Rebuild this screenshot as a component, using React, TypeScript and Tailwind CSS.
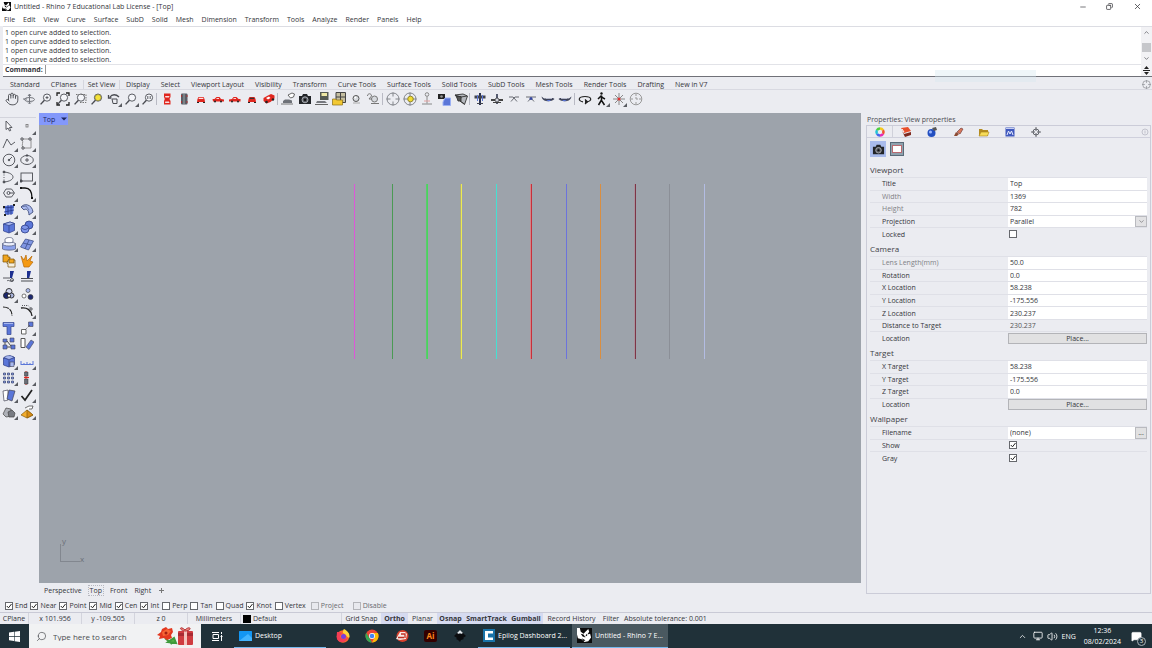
import React from "react";
import { ChevronDown, ChevronUp, Hand, Minus, Copy, X, Search, Monitor, Volume2, MessageSquareText } from "lucide-react";

type Icon = { name: string; art: React.ReactNode; more?: boolean };

const ink = "#4a4c52";
const blue = "#5b76d8";
const pale = "#a9b9f0";
const red = "#e0261f";

const Lens = ({ children }: { children?: React.ReactNode }) => (
  <g fill="none" stroke={ink} strokeWidth="0.9">
    <circle cx="8" cy="5.6" r="3.600" fill="#f4f5f9" />
    <path d="M5.400 8.200 1.600 12.400" strokeWidth="1.400" />
    {children}
  </g>
);

const Car = ({ dir }: { dir: number }) => (
  <g>
    <path d={dir > 0 ? "M1.500 7h2l2-2h3l1.500 2 3 .5V9.500h-11z" : "M12.500 7h-2l-2-2h-3L4 7l-3 .5v2h11.500z"} fill={red} />
    <path d="M6 6h2v1H5z" fill="#f8d5d5" />
    <circle cx="4" cy="9.600" r="1" fill="#222" />
    <circle cx="10" cy="9.600" r="1" fill="#222" />
  </g>
);

const CarFace = ({ rear }: { rear?: boolean }) => (
  <g>
    <path d="M4.500 5h5l1 2 .5 3h-8l.5-3z" fill={red} />
    <path d="M5 5.700h4L9.500 7h-5z" fill={rear ? "#333" : "#fbe3e3"} />
    <path d="M3 10h2v1H3zM9 10h2v1H9z" fill="#222" />
  </g>
);

const Target = ({ children }: { children?: React.ReactNode }) => (
  <g fill="none" stroke="#777a80" strokeWidth="0.9">
    <circle cx="7" cy="7" r="6" />
    <path d="M7 .5v4M7 9.500v4M.5 7h4M9.500 7h4" />
    {children}
  </g>
);

const Camera = () => (
  <g>
    <path d="M1 4h3l1-2h4l1 2h3v8H1z" fill="#222428" />
    <circle cx="7" cy="7.800" r="3" fill="#55585f" stroke="#bfc2c8" strokeWidth="0.8" />
    <circle cx="7" cy="7.800" r="1.200" fill="#111" />
  </g>
);

const Plane = ({ flip }: { flip?: boolean }) => (
  <g transform={flip ? "translate(14 0) scale(-1 1)" : undefined}>
    <path d="M.5 4.500c1 .5 2 2 3 2l8.500-.5 1.500 1c-2 2-5.500 2.500-8.500 2C2.500 8.600 1 7 .5 4.500z" fill="#3f4458" />
    <path d="M5 8h5L8 9.500z" fill={blue} />
    <path d="M5 6.500h6" stroke="#c9cde0" strokeWidth="0.8" />
  </g>
);

const topGroups: { wide?: boolean; items: Icon[] }[] = [
  {
    items: [
      { name: "Pan", art: <Hand width={14} height={14} strokeWidth={1.6} color={ink} /> },
      { name: "Rotate view", art: <g fill="none" stroke="#74777e"><ellipse cx="7.500" cy="7.500" rx="5" ry="2" /><path d="M7.500 2.500v9M6 4l1.500-2L9 4M6 10.500l1.500 1.500L9 10.500M1 7h4" /></g> },
      { name: "Zoom dynamic", art: <Lens><path d="M6.500 5.600h3M8 4.100v3" /></Lens> },
      { name: "Zoom extents", art: <g><Lens /><path d="M1 4V1h3M10 1h3v3M13 10v3h-3M4 13H1v-3" fill="none" stroke="#222" strokeWidth="1.300" /></g> },
      { name: "Zoom window", art: <g><Lens /><path d="M3 2.500h10v8H6" fill="none" stroke="#777" strokeDasharray="1.500 1" /></g> },
      { name: "Zoom selected", art: <g><Lens /><circle cx="8" cy="5.600" r="3.100" fill="#f4e23a" stroke="#77702a" strokeWidth=".6" /></g> },
      { name: "Undo view change", more: true, art: <g fill="none" stroke={ink}><path d="M3 5c2-3 6-3 9 0M1.500 3v3h3" strokeWidth="1.300" /><path d="M5 7h5v4.500H6z" /></g> },
      { name: "Zoom target", more: true, art: <Lens /> },
      { name: "Zoom 1:1", art: <Lens><path d="M6.800 4v3M9.200 4v3" /></Lens> },
    ],
  },
  {
    items: [
      { name: "Top view", art: <g><path d="M4 1.500h6.500V5l-1 2 1 2v3.500H4V9l.8-2L4 5z" fill={red} /><path d="M5 4h4.500L9 5.500H5.500zM5.300 9.500h3.600L9.500 11H5z" fill="#f9dede" /></g> },
      { name: "Bottom view", art: <g><rect x="4" y="1.500" width="6.500" height="11" rx="1" fill="#5a5d66" /><path d="M4 3h1v2H4zM9.500 3h1v2h-1zM4 9h1v2H4zM9.500 9h1v2h-1z" fill="#a33" /><path d="M7 2v10" stroke="#9aa" /></g> },
      { name: "Front view", art: <CarFace /> },
      { name: "Right view", art: <Car dir={1} /> },
      { name: "Left view", art: <Car dir={-1} /> },
      { name: "Back view", art: <CarFace rear /> },
      { name: "Perspective view", art: <g><path d="M1.500 6 5 4l4-2 3.500 1.500v3L8.500 10l-4 1.500L1.500 9z" fill={red} /><path d="m4 6 3-1.500L8.500 6 6 7.500z" fill="#fff" /><circle cx="4.500" cy="10" r="1.300" fill="#222" /><circle cx="11" cy="7.500" r="1.200" fill="#222" /></g> },
    ],
  },
  {
    items: [
      { name: "Named views", art: <g><path d="M2 9l2-1.500h4l3 1V11H2z" fill="#6e7178" /><path d="M0 12h12" stroke="#777" /><path d="m7 3 4-2 2.500 1-1 3-3 1z" fill="#fff" stroke="#444" strokeWidth=".8" /></g> },
      { name: "Camera", art: <Camera /> },
      { name: "Save view", art: <g><path d="M5 0h8.500v8H5z" fill="#555a54" /><path d="M6.500 1h5.500v3H6.500z" fill="#eee8a5" /><path d="M2 9h8l2 2H1z" fill="#77797f" /><path d="M0 12.500h13" stroke="#666" /></g> },
      { name: "Open view", art: <g><path d="M4 .5h9.500v10H4z" fill="#c4bea0" stroke="#444" /><path d="M8.500 1v9M4 5h9" stroke="#444" /><path d="M.5 7h3l1 1h6v5H.5z" fill="#f2c833" stroke="#8b6e12" strokeWidth=".7" /></g> },
      { name: "Camera position", art: <g><circle cx="7" cy="6.500" r="3" fill="#d7dade" stroke="#555" /><path d="M4 11h7" stroke="#aaa" /><circle cx="6.300" cy="5.500" r="1" fill="#fff" /></g> },
      { name: "Match view", art: <g fill="none" stroke="#777"><circle cx="8.500" cy="7" r="3" fill="#d7dade" /><path d="M1.500 4c0-3 4-3 4 0L3 7h3M5 11.500h8" /></g> },
    ],
  },
  {
    wide: true,
    items: [
      { name: "Place target", art: <Target /> },
      { name: "Place camera", art: <Target><circle cx="7.500" cy="7" r="2.800" fill="#f1dc32" stroke="#8a7d20" /></Target> },
      { name: "Align to point", art: <g fill="none" stroke="#888"><circle cx="7" cy="2.500" r="1.800" /><path d="M7 4.500v7M2 12h10" /><path d="M4 9h6" stroke="#e3a2a2" /></g> },
      { name: "Camera to object", art: <g><path d="M1 2h7v5H1z" fill="#222" /><circle cx="4.500" cy="4.500" r="1.300" fill="#999" /><path d="M8 6h5.500v7.500H6V10z" fill={blue} stroke="#9bb0f5" /></g> },
      { name: "Show camera", art: <g stroke="#333" strokeWidth=".9"><path d="m1 3 8-1 4.500 2-3 8.500-5-4z" fill="#b5b8be" /><path d="m1 3 6 2 6-1M7 5l-1 4 4.500 3" fill="none" /><path d="M2.500 4.500h4.500v4.500h-3z" fill="#555" /></g> },
    ],
  },
  {
    items: [
      { name: "Plane top", art: <g><path d="M6 1h2v12H6z" fill="#2b3152" /><path d="M1.500 3.500h11v3h-11zM4 11h6v1H4z" fill="#42454e" /><path d="M4 3h1v6H4zM9 3h1v6H9z" fill={blue} /></g> },
      { name: "Plane bottom", art: <g><path d="M6 2h2v10H6z" fill="#555b70" /><path d="M1 7h12v2H1zM3 10h8v1H3z" fill="#444" /><circle cx="7" cy="8" r="2" fill="#d2d5df" stroke="#333" strokeWidth=".7" /></g> },
      { name: "Plane front", art: <path d="M2 5h4l1 1 1-1h4M4 9.500 7 6l3 3.500" stroke="#6a6d75" fill="none" /> },
      { name: "Plane back", art: <g><path d="M2 5h10M4 9.500 7 6l3 3.500" stroke="#6a6d75" fill="none" /><circle cx="7" cy="6.500" r="1.500" fill="#3848a0" /></g> },
      { name: "Plane right", art: <Plane /> },
      { name: "Plane left", art: <Plane flip /> },
    ],
  },
  {
    wide: true,
    items: [
      { name: "Turntable", art: <g fill="none" stroke="#222" strokeWidth="1.200"><path d="M5 9.800C-.5 9 0 4.500 7 4.500s7.500 4.500 2 5.300" /><path d="m7 7.500 2.500 2.300L7 12" fill="#222" /></g> },
      { name: "Walkabout", more: true, art: <g fill="none" stroke="#111" strokeWidth="1.500"><circle cx="6.500" cy="1.500" r="1.200" fill="#111" stroke="none" /><path d="M6.500 3.500v5l3 4.500M6.500 8l-3 5M3 7l3-3 2 2 2 1" /></g> },
      { name: "Spin view", more: true, art: <g fill="none" stroke="#888" strokeWidth="1"><path d="M1 7h12M7 1v12M3 3l8 8M11 3l-8 8" /><circle cx="7" cy="7" r="1.500" fill="#d33" stroke="none" /></g> },
      { name: "Clock", art: <g fill="none" stroke="#999"><circle cx="7" cy="7" r="5.800" /><path d="M7 2v2M7 10v2M2 7h2M10 7h2M7 5v2h2" /></g> },
    ],
  },
];

const Cube = () => (
  <g stroke="#2c3c86" strokeWidth=".7">
    <path d="M1.500 4 8 2l4.500 1.500v7L7 13l-5.500-2z" fill={blue} />
    <path d="M1.500 4 8 2l4.500 1.500L7 5.500z" fill={pale} />
    <path d="M7 5.500V13" />
  </g>
);

const line = { fill: "none", stroke: ink, strokeWidth: 0.9 };

const sideIcons: Icon[] = [
  { name: "Select", art: <path d="m4 2 6 6.500H7.500l1.200 3-1.200.5-1.500-3L4 10.500z" fill="#f8f8fb" stroke={ink} strokeWidth=".9" /> },
  { name: "Point", more: true, art: <rect x="6" y="5.500" width="2" height="2.500" fill="none" stroke="#777" strokeWidth=".8" /> },
  { name: "Polyline", more: true, art: <path d="m1 12 4-9 4 6 4-3" {...line} /> },
  { name: "Control point curve", more: true, art: <g {...line}><path d="M2 3h8M2 3c2 4-1 5 1 9h8V3" stroke="#888" /><path d="M1 2h2v2H1zM9 2h2v2H9zM2 11h2v2H2z" fill="#fff" /></g> },
  { name: "Circle", more: true, art: <g {...line}><circle cx="7" cy="7" r="5.800" /><path d="m7 7 3-3" /><circle cx="7" cy="7" r=".8" fill={ink} /></g> },
  { name: "Ellipse", more: true, art: <g {...line}><ellipse cx="7" cy="7" rx="6.300" ry="4.500" /><path d="M7 5v4M5 7h4" /><circle cx="7" cy="2.500" r=".8" fill={ink} /></g> },
  { name: "Arc", more: true, art: <g {...line}><path d="M2 2c12 1 12 9 0 10" /><path d="M2 2v10" strokeDasharray="1 1.500" /><circle cx="2" cy="2" r="1" fill={ink} /><circle cx="2" cy="12" r="1" fill={ink} /></g> },
  { name: "Rectangle", more: true, art: <g {...line}><rect x="1" y="3" width="11.500" height="8" /><path d="M0 10h2v2H0z" fill={ink} /></g> },
  { name: "Polygon", more: true, art: <g {...line}><path d="M4 3h5.500l3 4-3 4H4L1.500 7z" /><circle cx="6.500" cy="7" r="1.500" /><path d="M7 7h5" /></g> },
  { name: "Fillet curves", more: true, art: <g fill="none" stroke="#111" strokeWidth="1.300"><path d="M1 2h4c5 0 7 4 7 10" /><path d="M1 3v-2M11 12h2" strokeWidth="2" /></g> },
  { name: "Surface from points", more: true, art: <g><path d="m3 3 9-1-1 9-8 1z" fill={blue} /><path d="m1 5 11-1M2 9l10-2M6 2v10M9 2v10" stroke="#26388b" strokeWidth=".8" /><path d="M1 3h2v2H1zM2 11h2v2H2zM11 1h2v2h-2z" fill="#222" /></g> },
  { name: "Surface tools", more: true, art: <g><path d="M1 4c3-4 11-3 12 5l-4 3C9 7 6 5 4 7z" fill={pale} stroke="#4d5a86" /><path d="m1 4 5-1 3 4" fill="none" stroke="#4d5a86" strokeWidth=".7" /></g> },
  { name: "Box", more: true, art: <Cube /> },
  { name: "Boolean", more: true, art: <g stroke="#2c3c86" strokeWidth=".8"><circle cx="9" cy="5" r="4" fill={blue} /><circle cx="5" cy="9" r="4" fill="#7d94e8" /><path d="M2 8c2 2 4 2 6 0" fill="none" /></g> },
  { name: "Solid tools", more: true, art: <g stroke="#4c5576" strokeWidth=".7"><path d="M.5 6.500v5.500c2 1.500 11 1.500 13 0V6.500z" fill="#8da2eb" /><ellipse cx="7" cy="7" rx="6.500" ry="2" fill="#e9edfb" /><path d="M3 2c2-2 7-2 8 0v3c-2 1-6 1-8 0z" fill="#fff" /></g> },
  { name: "SubD", more: true, art: <g stroke="#33457f" strokeWidth=".7"><path d="m.5 10 5-8 8 2-5 9z" fill="#7f95e2" /><path d="m3 6 8 2M5 12l4-9" fill="none" /></g> },
  { name: "Plugins", art: <g fill="#f0a51f" stroke="#7a5207" strokeWidth=".7"><path d="M1 1h5v2h2v5H1z" /><path d="M6 6h7v7H6V9.500H5V8h1z" fill="#f6f0e0" /><path d="M7 5h5v4H7z" /></g> },
  { name: "Explode", art: <path d="m1 2 3 4 2-5 1 6 5-5-2 5 3 1-4 5H4z" fill="#f59a13" stroke="#b86806" strokeWidth=".7" /> },
  { name: "Trim", art: <g><path d="M8 1h4l-2 7H8z" fill="#1d2f8f" /><path d="M1 8h7M5 11c2-2 3 2 6-1" {...line} /><circle cx="10" cy="10" r="1.500" {...line} /></g> },
  { name: "Split", art: <g><path d="M7 1h4l-2 8H7z" fill="#1d2f8f" /><path d="M1 8.500h12M1 11h12" stroke={ink} strokeWidth="1.200" /></g> },
  { name: "Group", more: true, art: <g stroke="#222" strokeWidth=".9"><circle cx="7" cy="4.500" r="3" fill="#d4d9ef" /><circle cx="4.500" cy="8.500" r="3" fill="#1c276f" /><circle cx="9.500" cy="8.500" r="2.500" fill="#a9b3dc" /><path d="M7 6.500 9 9l-2 1.500L5 9z" fill="#fff" /></g> },
  { name: "Ungroup", art: <g stroke="#444" strokeWidth=".7"><circle cx="8" cy="3.500" r="2" fill={pale} /><circle cx="4" cy="9" r="2" fill="#fff" /><circle cx="10.500" cy="10" r="2.500" fill="#1c276f" /></g> },
  { name: "Edit points", art: <path d="M1 3c6 0 9 3 9 9" fill="none" stroke="#222" strokeWidth="1.200" strokeDasharray="6 1" /> },
  { name: "Control points on", more: true, art: <g {...line}><path d="M1 4c6-1 10 2 11 8" stroke="#222" strokeWidth="1.300" /><path d="M2 1.500h6l3 3" strokeDasharray="1 1" /><path d="M10 4h2v2h-2z" fill="#fff" /></g> },
  { name: "Text", art: <g><path d="M1 1.500h11v4h-3v8H5v-8H1z" fill={blue} stroke="#33458d" strokeWidth=".7" /><path d="M2 2h9v1H2z" fill={pale} /></g> },
  { name: "Move", more: true, art: <g><path d="M1.500 8.500h4.500v4.500H1.500z" fill="#fff" stroke="#666" /><path d="M8.500 1H13v4.500H8.500z" fill={blue} stroke="#445" strokeWidth=".6" /><path d="m5 9 5-5" stroke={ink} strokeDasharray="1 1" /></g> },
  { name: "Array", art: <g><path d="M1 2h4v3H1zM1 8h4v4H1zM8 1h4v4H8zM9 8h4v4H9z" fill={blue} stroke="#445" strokeWidth=".6" /><path d="M3 5v3M5 4l4 5M5 10h4" stroke={ink} /></g> },
  { name: "Orient", art: <g><path d="M1 1.500h4v9H1z" fill="#fff" stroke="#555" /><path d="m6 10 5-7 3 2-5 7.500z" fill={blue} stroke="#445" strokeWidth=".6" /></g> },
  { name: "Solid edit", more: true, art: <g><Cube /><path d="M2 3.500C4 1 10 1 12 3.500L7 5.500z" fill={pale} stroke="#2c3c86" strokeWidth=".6" /><path d="M8 8h4v4.500H8z" fill={pale} stroke="#445" strokeWidth=".6" /></g> },
  { name: "Dimension", more: true, art: <path d="M1 10.500h12M1 7v4M4 9v2M7 8v3M10 9v2M13 7v4" stroke={blue} fill="none" /> },
  { name: "Grid array", more: true, art: <path d="M1.500 2h2v2h-2zM5.500 2h2v2h-2zM9.500 2h2v2h-2zM1.500 6h2v2h-2zM5.500 6h2v2h-2zM9.500 6h2v2h-2zM1.500 10h2v2h-2zM5.500 10h2v2h-2zM9.500 10h2v2h-2z" fill="#8fa2e8" stroke="#34406e" strokeWidth=".7" /> },
  { name: "Align", more: true, art: <g><path d="M6 0v14" stroke={red} /><path d="M4.500 1h3.500v4H4.500zM4.500 8h3.500v5H4.500z" fill="#6b6f78" stroke="#333" strokeWidth=".5" /><path d="M4 6.500h5" stroke={red} strokeWidth="1.200" /></g> },
  { name: "Layout", more: true, art: <g stroke="#445" strokeWidth=".7"><path d="m1 3 5-1v10l-4 1z" fill="#fff" /><path d="m7 2 6 1-3 10-5-2z" fill={blue} /></g> },
  { name: "Check", more: true, art: <path d="m1.500 8 3.500 4L12 2" fill="none" stroke="#222" strokeWidth="1.700" /> },
  { name: "Render", more: true, art: <g stroke="#444" strokeWidth=".7"><path d="m1 9 3-6 5 1 1 7-6 1z" fill="#aeb1b8" /><path d="m6 7 4-2 3 3-1 4H7z" fill="#787b82" /></g> },
  { name: "Pyramid", more: true, art: <g strokeWidth=".7"><path d="m1 10 6-5 6 5-6 3z" fill="#f3ac2c" stroke="#855b0f" /><path d="M7 5v8l6-3z" fill="#d98d16" stroke="#855b0f" /><path d="m5 3 4-2h4l-1 3H9" fill="#fff" stroke="#333" /></g> },
];

function ToolButton({ icon, className }: { icon: Icon; className: string }) {
  return (
    <button aria-label={icon.name} className={`relative flex items-center justify-center ${className}`}>
      <svg width="14" height="14" viewBox="0 0 14 14" aria-hidden="true" className="shrink-0">{icon.art}</svg>
      {icon.more && (
        <svg className="absolute right-0 bottom-0" width="4" height="4" viewBox="0 0 4 4" aria-hidden="true">
          <path d="M4 0v4H0z" fill="#5a5c62" />
        </svg>
      )}
    </button>
  );
}

function RhinoLogo({ className }: { className: string }) {
  return (
    <svg viewBox="0 0 16 16" className={`shrink-0 ${className}`} aria-hidden="true">
      <rect width="16" height="16" fill="#0b0b0b" />
      <path d="M0 0h3l1 4 3 2 2-2 3-3 1 3-2 3 3-1 1 4-3 4-4 1-3-3-4-1-1-4z" fill="#fff" />
      <path d="m4 6 3 1 2 3-3-1zM10 6l1 2-2 1zM5 11l4 2-2 1z" fill="#0b0b0b" />
    </svg>
  );
}

const menus = ["File", "Edit", "View", "Curve", "Surface", "SubD", "Solid", "Mesh", "Dimension", "Transform", "Tools", "Analyze", "Render", "Panels", "Help"];
const tabs = ["Standard", "CPlanes", "Set View", "Display", "Select", "Viewport Layout", "Visibility", "Transform", "Curve Tools", "Surface Tools", "Solid Tools", "SubD Tools", "Mesh Tools", "Render Tools", "Drafting", "New in V7"];

// Each curve is one pixel wide; "edge" is the anti-aliased pixel to its left.
const curves: { x: number; color: string; edge?: string }[] = [
  { x: 315, color: "#dd56d8" },
  { x: 353, color: "#4b9a54" },
  { x: 388, color: "#46d75c", edge: "#5cc96c" },
  { x: 422, color: "#eceb50", edge: "#b0ae7e" },
  { x: 457, color: "#45e0d2" },
  { x: 492, color: "#c8303b", edge: "#d08488" },
  { x: 527, color: "#6c73dc" },
  { x: 561, color: "#d98e41" },
  { x: 596, color: "#7d3547", edge: "#a8929c" },
  { x: 630, color: "#8b8f97" },
  { x: 665, color: "#b3bce2" },
];

type Row = { label: string; value?: string; kind?: "select" | "check" | "button" | "file" | "static"; checked?: boolean; dim?: boolean };
const sections: { title: string; size: string; rows: Row[] }[] = [
  {
    title: "Viewport",
    size: "h-[63px]",
    rows: [
      { label: "Title", value: "Top" },
      { label: "Width", value: "1369", dim: true },
      { label: "Height", value: "782", dim: true },
      { label: "Projection", value: "Parallel", kind: "select" },
      { label: "Locked", kind: "check" },
    ],
  },
  {
    title: "Camera",
    size: "h-[88px]",
    rows: [
      { label: "Lens Length(mm)", value: "50.0", dim: true },
      { label: "Rotation", value: "0.0" },
      { label: "X Location", value: "58.238" },
      { label: "Y Location", value: "-175.556" },
      { label: "Z Location", value: "230.237" },
      { label: "Distance to Target", value: "230.237", kind: "static" },
      { label: "Location", value: "Place...", kind: "button" },
    ],
  },
  {
    title: "Target",
    size: "h-[50px]",
    rows: [
      { label: "X Target", value: "58.238" },
      { label: "Y Target", value: "-175.556" },
      { label: "Z Target", value: "0.0" },
      { label: "Location", value: "Place...", kind: "button" },
    ],
  },
  {
    title: "Wallpaper",
    size: "h-[38px]",
    rows: [
      { label: "Filename", value: "(none)", kind: "file" },
      { label: "Show", kind: "check", checked: true },
      { label: "Gray", kind: "check", checked: true },
    ],
  },
];

function Check({ id, checked, disabled }: { id: string; checked?: boolean; disabled?: boolean }) {
  return (
    <span className="relative inline-flex size-2 shrink-0">
      <input
        id={id}
        type="checkbox"
        defaultChecked={checked}
        disabled={disabled}
        className="peer size-2 appearance-none border border-[#66686d] bg-white disabled:border-[#b4b5ba] disabled:bg-[#e8e9ee]"
      />
      <svg viewBox="0 0 8 8" className="pointer-events-none absolute inset-0 hidden size-2 peer-checked:block" aria-hidden="true">
        <path d="M1.800 4 3.500 5.800 6.500 2" fill="none" stroke="#222" strokeWidth="1" />
      </svg>
    </span>
  );
}

function PropertyValue({ row, id }: { row: Row; id: string }) {
  const field = "min-w-0 flex-1 self-stretch bg-white px-0.5 outline-none";
  if (row.kind === "check") return <span className="flex pl-px"><Check id={id} checked={row.checked} /></span>;
  if (row.kind === "static") return <output id={id} className="px-0.5 text-[#555]">{row.value}</output>;
  if (row.kind === "button")
    return <button id={id} className="h-[11px] flex-1 border border-[#b3b4b8] bg-[#e1e1e2] leading-[9px]">{row.value}</button>;
  if (row.kind === "select")
    return (
      <span className="relative flex flex-1 self-stretch">
        <select id={id} defaultValue={row.value} className={`${field} appearance-none`}>
          <option>Parallel</option>
          <option>Perspective</option>
        </select>
        <span className="pointer-events-none absolute inset-y-0 right-0 flex w-3 items-center justify-center border border-[#b9babf] bg-[#e2e2e4]">
          <ChevronDown size={7} strokeWidth={1.500} />
        </span>
      </span>
    );
  return (
    <>
      <input id={id} defaultValue={row.value} className={field} />
      {row.kind === "file" && <button aria-label="Browse" className="h-3 w-3 border border-[#b9babf] bg-[#e1e1e2] leading-[6px]">...</button>}
    </>
  );
}

const panelTabs: { name: string; art: React.ReactNode }[] = [
  {
    name: "Properties",
    art: (
      <g fill="none" strokeWidth="2.500">
        <path d="M6 2.500a3.500 3.500 0 0 1 3 1.700" stroke="#f4c91d" />
        <path d="M9 4.200a3.500 3.500 0 0 1 0 3.600" stroke="#f0542c" />
        <path d="M9 7.800a3.500 3.500 0 0 1-3 1.700" stroke="#e52ab4" />
        <path d="M6 9.500a3.500 3.500 0 0 1-3-1.700" stroke="#4763ed" />
        <path d="M3 7.800a3.500 3.500 0 0 1 0-3.600" stroke="#25c1d8" />
        <path d="M3 4.200a3.500 3.500 0 0 1 3-1.700" stroke="#4fcf3c" />
      </g>
    ),
  },
  { name: "Layers", art: <g><path d="m1 2 7-1 3 4-7 2z" fill="#e8502c" /><path d="m2 5 2 3 7-2v3L5 11z" fill="#7e2a20" /><path d="m2 3 2 3" stroke="#fff" /></g> },
  { name: "Display", art: <g><circle cx="5.500" cy="7" r="4" fill="#234fc0" /><circle cx="4.500" cy="6" r="1.500" fill="#9bb8ff" /><path d="m6 2 4-1 1 3-3 1z" fill="#555" /></g> },
  { name: "Materials", art: <g><path d="m2 10 2-4 3 2-2 2z" fill="#8d4a32" /><path d="m5 6 4-4 2 1-3 5z" fill="#d9785b" stroke="#633" strokeWidth=".6" /></g> },
  { name: "Libraries", art: <g><path d="M1 3h3l1 1h5v6H1z" fill="#b48b1f" /><path d="m3 6h8l-1.500 4H1z" fill="#f7dc58" stroke="#a6821c" strokeWidth=".6" /></g> },
  { name: "Notes", art: <g><rect x="1.500" y="1.500" width="9" height="9" fill="#4059bd" /><path d="M2 2.500h8" stroke="#c7cff2" /><path d="m3 9 1.500-4L6 8l1.500-3L9 9" fill="none" stroke="#e9edff" /></g> },
  { name: "Named positions", art: <g fill="none" stroke="#55585e" strokeWidth=".9"><circle cx="6" cy="6" r="3" /><path d="M6 1v4M6 7v4M1 6h4M7 6h4" /></g> },
];

function PropertiesPanel() {
  return (
    <aside className="ml-[5px] flex w-[286px] shrink-0 flex-col pt-0.5 pb-1.5">
      <h2 className="h-[10px] px-px leading-[9px] text-[#4a4b50]">Properties: View properties</h2>
      <div className="mr-px flex flex-1 flex-col border border-[#cbccd8]">
        <div className="flex h-3 items-center border-b border-[#cfd0dc] pr-px">
          {panelTabs.map((t, i) => (
            <button key={t.name} aria-label={t.name} className={i === 0 ? "flex h-3 w-[26px] items-center justify-center border-r border-[#d0d1da]" : "flex w-[26px] items-center justify-center"}>
              <svg width="12" height="12" viewBox="0 0 12 12" aria-hidden="true">{t.art}</svg>
            </button>
          ))}
          <button aria-label="Panel options" className="ml-auto">
            <svg width="8" height="8" viewBox="0 0 8 8" fill="none" stroke="#c2c3cd" aria-hidden="true"><circle cx="4" cy="4" r="3" /><path d="M4 2.500v3" /></svg>
          </button>
        </div>
        <div className="flex gap-1 px-[3px] pt-[3px]">
          <button aria-label="View properties" className="flex size-4 items-center justify-center bg-[#a9bbec]">
            <svg width="13" height="13" viewBox="0 0 14 14" aria-hidden="true"><Camera /></svg>
          </button>
          <button aria-label="Viewport frame" className="flex size-[14px] items-center justify-center self-center border border-[#596a78] bg-[#8fa2ae]">
            <span className="h-2 w-2.5 border border-[#b96a70] bg-white" />
          </button>
        </div>
        <div className="mt-1 pr-[3px] pl-[3px]">
          {sections.map((s) => (
            <section key={s.title}>
              <h3 className="h-4 text-[8px] leading-[17px] text-[#404146]">{s.title}</h3>
              <div className={`grid auto-rows-fr ${s.size}`}>
                {s.rows.map((r) => {
                  const id = `${s.title}-${r.label}`.replace(/\W+/g, "-");
                  return (
                    <div key={r.label} className="flex min-h-0 items-center border-t border-[#dfe0e7]">
                      <label htmlFor={id} className={r.dim ? "w-[138px] shrink-0 pl-3 text-[#808186]" : "w-[138px] shrink-0 pl-3"}>{r.label}</label>
                      <div className="flex min-w-0 flex-1 items-center self-stretch">
                        <PropertyValue row={r} id={id} />
                      </div>
                    </div>
                  );
                })}
              </div>
            </section>
          ))}
        </div>
      </div>
    </aside>
  );
}

const snaps: { label: string; on?: boolean; off?: boolean }[] = [
  { label: "End", on: true }, { label: "Near", on: true }, { label: "Point", on: true }, { label: "Mid", on: true },
  { label: "Cen", on: true }, { label: "Int", on: true }, { label: "Perp" }, { label: "Tan" }, { label: "Quad" },
  { label: "Knot", on: true }, { label: "Vertex" }, { label: "Project", off: true }, { label: "Disable", off: true },
];

const toggles: { label: string; on?: boolean; width: string }[] = [
  { label: "Grid Snap", width: "w-[39px]" },
  { label: "Ortho", on: true, width: "w-[27px]" },
  { label: "Planar", width: "w-[29px]" },
  { label: "Osnap", on: true, width: "w-[27px]" },
  { label: "SmartTrack", on: true, width: "w-[45px]" },
  { label: "Gumball", on: true, width: "w-[34px]" },
  { label: "Record History", width: "w-[57px]" },
  { label: "Filter", width: "w-[22px]" },
];

function Taskbar() {
  return (
    <footer className="flex h-6 shrink-0 items-stretch bg-[#203139] text-white">
      <button aria-label="Start" className="flex w-[29px] items-center justify-center">
        <svg width="11" height="11" viewBox="0 0 11 11" fill="#fff" aria-hidden="true"><path d="M0 1.500 5 .8V5H0zM5.600.7 11 0v5H5.600zM0 5.700h5v4.200L0 9.200zM5.600 5.700H11V11l-5.400-.8z" /></svg>
      </button>
      <div className="flex w-[172px] items-center bg-[#f1f2f3] text-[#4b4d50]">
        <Search size={11} strokeWidth={1.500} className="ml-[7px] -scale-x-100" />
        <input aria-label="Search" placeholder="Type here to search" className="ml-1.5 min-w-0 flex-1 bg-transparent text-[8px] outline-none placeholder:text-[#4b4d50]" />
        <svg width="38" height="20" viewBox="0 0 38 20" aria-hidden="true" className="mr-1.5">
          <path d="m8 12 7 6M11 16l6-4 2 5z" stroke="#3e9a3c" strokeWidth="2" fill="#57b347" />
          <path d="m5 3 4-2 2 2 4-1 1 4-2 3 1 3-5 2-3-2-5 1 1-3-3-1 4-3z" fill="#e3371f" />
          <path d="m5 6 5-3 4 2-3 4-5 1z" fill="#f76635" />
          <circle cx="9" cy="7" r="1.500" fill="#a41d12" />
          <rect x="21" y="5" width="15" height="14" rx="1" fill="#cf3c40" />
          <path d="M21 7h15v3H21z" fill="#a92b33" />
          <path d="M27 5h3v14h-3z" fill="#f4c4bd" />
          <path d="M28 5c-7-1-5-6 0-1 5-5 8 0 1 1z" fill="#ef8a80" stroke="#b02f35" />
        </svg>
      </div>
      <button aria-label="Task view" className="flex w-[33px] items-center justify-center">
        <svg width="11" height="11" viewBox="0 0 11 11" fill="none" stroke="#fff" aria-hidden="true"><path d="M0 1.500h7M0 9.500h7M1 3.500h5.500v4H1zM9.500 1v2M9.500 4v6M8.500 5.500h2" /></svg>
      </button>
      <button className="flex w-[92px] items-center gap-[3px] border-b border-[#76b9ed] pl-[5px] text-left">
        <svg width="13" height="10" viewBox="0 0 13 10" aria-hidden="true"><rect width="13" height="10" rx=".5" fill="#1396f3" /><path d="M0 10 9 3l4 4v3z" fill="#42b4ff" /></svg>
        Desktop
      </button>
      <nav aria-label="Pinned apps" className="ml-[2px] flex">
        <button aria-label="Firefox" className="flex w-[29px] items-center justify-center">
          <svg width="14" height="14" viewBox="0 0 14 14" aria-hidden="true"><circle cx="7" cy="7.500" r="6.200" fill="#ff6a2b" /><path d="M8 0c4 2 6 5 5.500 8.500C11 9 10 5 7 4c0-2 0-3 1-4z" fill="#ffd43b" /><path d="M1 3c2 0 4 0 5 1L4 7c0 4 6 4 8 1-1 7-12 7-11.300-1z" fill="#f63d55" /><circle cx="7.500" cy="7.500" r="2.500" fill="#7a3ee0" /></svg>
        </button>
        <button aria-label="Chrome" className="flex w-[30px] items-center justify-center">
          <svg width="14" height="14" viewBox="0 0 14 14" aria-hidden="true"><circle cx="7" cy="7" r="6.500" fill="#e94335" /><path d="M1.300 3.800 7 13.500A6.500 6.500 0 0 1 1.300 3.800z" fill="#34a853" /><path d="M7 4h5.800A6.500 6.500 0 0 1 7 13.500L9.600 8.500z" fill="#fbbc05" /><circle cx="7" cy="7" r="3" fill="#fff" /><circle cx="7" cy="7" r="2.300" fill="#4285f4" /></svg>
        </button>
        <button aria-label="CAD viewer" className="flex w-[29px] items-center justify-center">
          <svg width="14" height="14" viewBox="0 0 14 14" aria-hidden="true"><circle cx="7.500" cy="7" r="6" fill="#d8402c" /><path d="M1 10 5 3h5l2 2-1 5-6 1z" fill="#f6e9e4" /><path d="M3 8.500h6M6 5h4v4" stroke="#c02f22" fill="none" strokeWidth="1.300" /></svg>
        </button>
        <button aria-label="Illustrator" className="flex w-[29px] items-center justify-center">
          <span className="flex h-3 w-[13px] items-center justify-center rounded-xs bg-[#330000] text-[8px] leading-none font-bold text-[#ff8a1c]">Ai</span>
        </button>
        <button aria-label="Inkscape" className="flex w-[30px] items-center justify-center">
          <svg width="14" height="14" viewBox="0 0 14 14" aria-hidden="true"><path d="m7 1 6 6-3 2 1 1-3 1-1 2-2-2-2-1 1-1-3-2z" fill="#0b0d10" /><path d="m7 1 3 3-2 1-1-1-1 1-2-1z" fill="#dfe6ec" /></svg>
        </button>
      </nav>
      <button className="ml-[3px] flex w-[92px] items-center gap-[3px] border-b border-[#76b9ed] pl-[5px] text-left whitespace-nowrap">
        <svg width="12" height="13" viewBox="0 0 12 13" aria-hidden="true" className="shrink-0"><rect width="12" height="13" fill="#1a73a8" /><path d="M2 2h8v2.500H5v4h5V11H2z" fill="#fff" /></svg>
        Epilog Dashboard 2...
      </button>
      <button className="ml-0.5 flex w-[96px] items-center gap-[3px] border-b border-[#76b9ed] bg-[#4a5960] pl-[5px] text-left whitespace-nowrap">
        <RhinoLogo className="size-[15px]" />
        Untitled - Rhino 7 E...
      </button>
      <div className="ml-auto flex items-center gap-1 pr-2.5">
        <ChevronUp size={9} strokeWidth={2} />
        <Monitor size={10} strokeWidth={2} className="ml-0.5" />
        <Volume2 size={11} strokeWidth={1.800} />
        <span>ENG</span>
        <time className="ml-1 text-center leading-[11px]">12:36<br />08/02/2024</time>
        <button aria-label="Notifications, 3 new" className="relative ml-1.5">
          <MessageSquareText size={11} fill="#fff" stroke="#fff" strokeWidth={1.500} />
          <span className="absolute -right-1 -bottom-1 flex size-[9px] items-center justify-center rounded-full border border-[#aab3b8] bg-[#203139] text-[6px] leading-none">3</span>
        </button>
      </div>
    </footer>
  );
}

export default function App() {
  return (
    <div className="flex min-h-screen flex-col overflow-hidden bg-[#ebecf1] font-['Open_Sans','Noto_Sans',sans-serif] text-[7px] leading-[9px] text-[#34353a]">
      <header className="bg-white">
        <div className="flex h-[13px] items-center pl-0.5">
          <RhinoLogo className="size-[9px]" />
          <h1 className="ml-[3px]">Untitled - Rhino 7 Educational Lab License - [Top]</h1>
          <div className="ml-auto flex items-center">
            <button aria-label="Minimize" className="flex w-[27px] justify-center"><Minus size={8} strokeWidth={2} /></button>
            <button aria-label="Restore" className="flex w-[27px] justify-center"><Copy size={7} strokeWidth={2.500} className="-scale-x-100" /></button>
            <button aria-label="Close" className="flex w-[29px] justify-center"><X size={9} strokeWidth={2} /></button>
          </div>
        </div>
        <nav aria-label="Menu" className="flex h-[13px] items-center gap-2 pl-1">
          {menus.map((m) => <button key={m}>{m}</button>)}
        </nav>
      </header>

      <section aria-label="Command" className="relative ml-[3px] flex h-[51px] shrink-0 border-t border-b border-t-[#dcdde3] border-b-[#707178] bg-white">
        <div className="flex flex-1 flex-col">
          <div className="flex h-[38px] flex-col border-b border-[#e2e3e8] pt-px pl-0.5">
            {[0, 1, 2, 3].map((n) => <p key={n}>1 open curve added to selection.</p>)}
          </div>
          <div className="flex flex-1 items-start gap-0.5 pl-0.5">
            <label htmlFor="command" className="font-bold">Command:</label>
            <input id="command" className="h-[9px] flex-1 border-l border-[#999] outline-none" />
          </div>
        </div>
        <div className="flex w-[11px] flex-col items-center bg-[#f2f2f5]">
          <div className="flex h-[37px] flex-col items-center justify-between py-0.5">
            <ChevronUp size={7} />
            <span className="mt-1 h-[9px] w-[9px] bg-[#c6c7cb]" />
            <ChevronDown size={7} />
          </div>
          <div className="flex flex-1 flex-col items-center justify-center">
            <svg width="7" height="9" viewBox="0 0 7 9" fill="#222" aria-hidden="true"><path d="m3.500 0 2.500 3H1zM3.500 9 6 6H1zM0 4h7v1H0z" /></svg>
          </div>
        </div>
        <div className="pointer-events-none absolute right-[116px] -bottom-1.5 h-3 w-[101px] bg-[#d8e8f0]/40" />
      </section>

      <section aria-label="Toolbars" className="flex h-9 shrink-0 flex-col">
        <div className="mt-[3px] flex h-[10px] items-stretch gap-px border-b border-[#d8d9e1] pl-[5px]">
          {tabs.map((t) => (
            <button key={t} className={t === "Set View" ? "border-x border-[#d5d6de] px-1 whitespace-nowrap" : "px-[5px] whitespace-nowrap"}>{t}</button>
          ))}
          <button aria-label="Toolbar options" className="mr-px ml-auto">
            <svg width="9" height="9" viewBox="0 0 14 14" aria-hidden="true"><Target /></svg>
          </button>
        </div>
        <div className="flex h-[17px] items-center pl-[3px]">
          {topGroups.map((g, gi) => (
            <React.Fragment key={gi}>
              {gi > 0 && <span className={g.wide ? "ml-px h-3 w-0.5 border-l border-[#b9bac4]" : "h-3 w-0.5 border-l border-[#b9bac4]"} />}
              {g.items.map((icon) => <ToolButton key={icon.name} icon={icon} className="h-4 w-[17px]" />)}
            </React.Fragment>
          ))}
        </div>
      </section>

      <main className="flex flex-1">
        <aside aria-label="Main tools" className="w-[39px] shrink-0 pt-1">
          <div className="grid h-[303px] w-9 auto-rows-fr grid-cols-2 border-t border-[#d3d4dc]">
            {sideIcons.map((icon) => <ToolButton key={icon.name} icon={icon} className="min-h-0" />)}
          </div>
        </aside>
        <div className="flex min-w-0 flex-1 flex-col">
          <section aria-label="Top viewport" className="relative flex-1 bg-[#9da3ab]">
            <button className="flex h-3 w-[29px] items-center justify-between bg-[#8398fb] pr-px pl-1 text-[#1c255f]">
              Top
              <svg width="6" height="4" viewBox="0 0 6 4" aria-hidden="true"><path d="M0 .5h6l-3 3z" fill="#1c255f" /></svg>
            </button>
            <svg className="absolute inset-0 h-full w-full" aria-hidden="true" shapeRendering="crispEdges">
              {curves.map((c) => (
                <g key={c.x}>
                  {c.edge && <rect x={c.x - 1} y="71" width="1" height="175" fill={c.edge} />}
                  <rect x={c.x} y="71" width="1" height="175" fill={c.color} />
                </g>
              ))}
            </svg>
            <div className="absolute bottom-[21px] left-[21px] flex items-end text-[#6b7078]">
              <div>
                <span className="block h-[7px] pl-0.5 text-[8px] leading-[7px]">y</span>
                <span className="block h-[18px] w-[20px] border-b border-l border-[#82878f]" />
              </div>
              <span className="text-[8px] leading-[6px]">x</span>
            </div>
          </section>
          <nav aria-label="Viewports" className="flex h-[17px] shrink-0 items-center gap-1.5 pb-0.5 pl-[5px]">
            <button>Perspective</button>
            <button className="border border-dotted border-[#b6b7bf] px-px">Top</button>
            <button>Front</button>
            <button className="px-px">Right</button>
            <button aria-label="Add viewport">
              <svg width="7" height="7" viewBox="0 0 7 7" stroke="#777" aria-hidden="true"><path d="M3.500 1v5M1 3.500h5" /></svg>
            </button>
          </nav>
        </div>
        <PropertiesPanel />
      </main>

      <fieldset aria-label="Object snaps" className="flex h-3 shrink-0 items-center gap-[3px] pt-px pl-[5px]">
        {snaps.map((s) => (
          <div key={s.label} className={s.off ? "mr-1 ml-0.5 flex items-center gap-0.5 text-[#696a70]" : "flex items-center gap-0.5"}>
            <Check id={`snap-${s.label}`} checked={s.on} disabled={s.off} />
            <label htmlFor={`snap-${s.label}`}>{s.label}</label>
          </div>
        ))}
      </fieldset>
      <div className="flex h-3 shrink-0 items-center border-t border-[#c9cad6] whitespace-nowrap [&>*]:h-full">
        <button className="w-[29px] border-r border-[#d3d4dd]">CPlane</button>
        <span className="w-[53px] border-r border-[#d3d4dd] text-center leading-[11px]">x 101.956</span>
        <span className="w-[53px] border-r border-[#d3d4dd] text-center leading-[11px]">y -109.505</span>
        <span className="w-[53px] border-r border-[#d3d4dd] text-center leading-[11px]">z 0</span>
        <span className="w-[53px] border-r border-[#d3d4dd] text-center leading-[11px]">Millimeters</span>
        <button className="flex w-[101px] items-center gap-0.5 border-r border-[#d3d4dd] pl-0.5"><span className="size-2 bg-black" />Default</button>
        {toggles.map((t) => (
          <button key={t.label} aria-pressed={!!t.on} className={`${t.width} ${t.on ? "bg-[#d5daf0] font-bold" : ""}`}>{t.label}</button>
        ))}
        <span className="ml-0.5 leading-[11px]">Absolute tolerance: 0.001</span>
      </div>
      <Taskbar />
    </div>
  );
}
